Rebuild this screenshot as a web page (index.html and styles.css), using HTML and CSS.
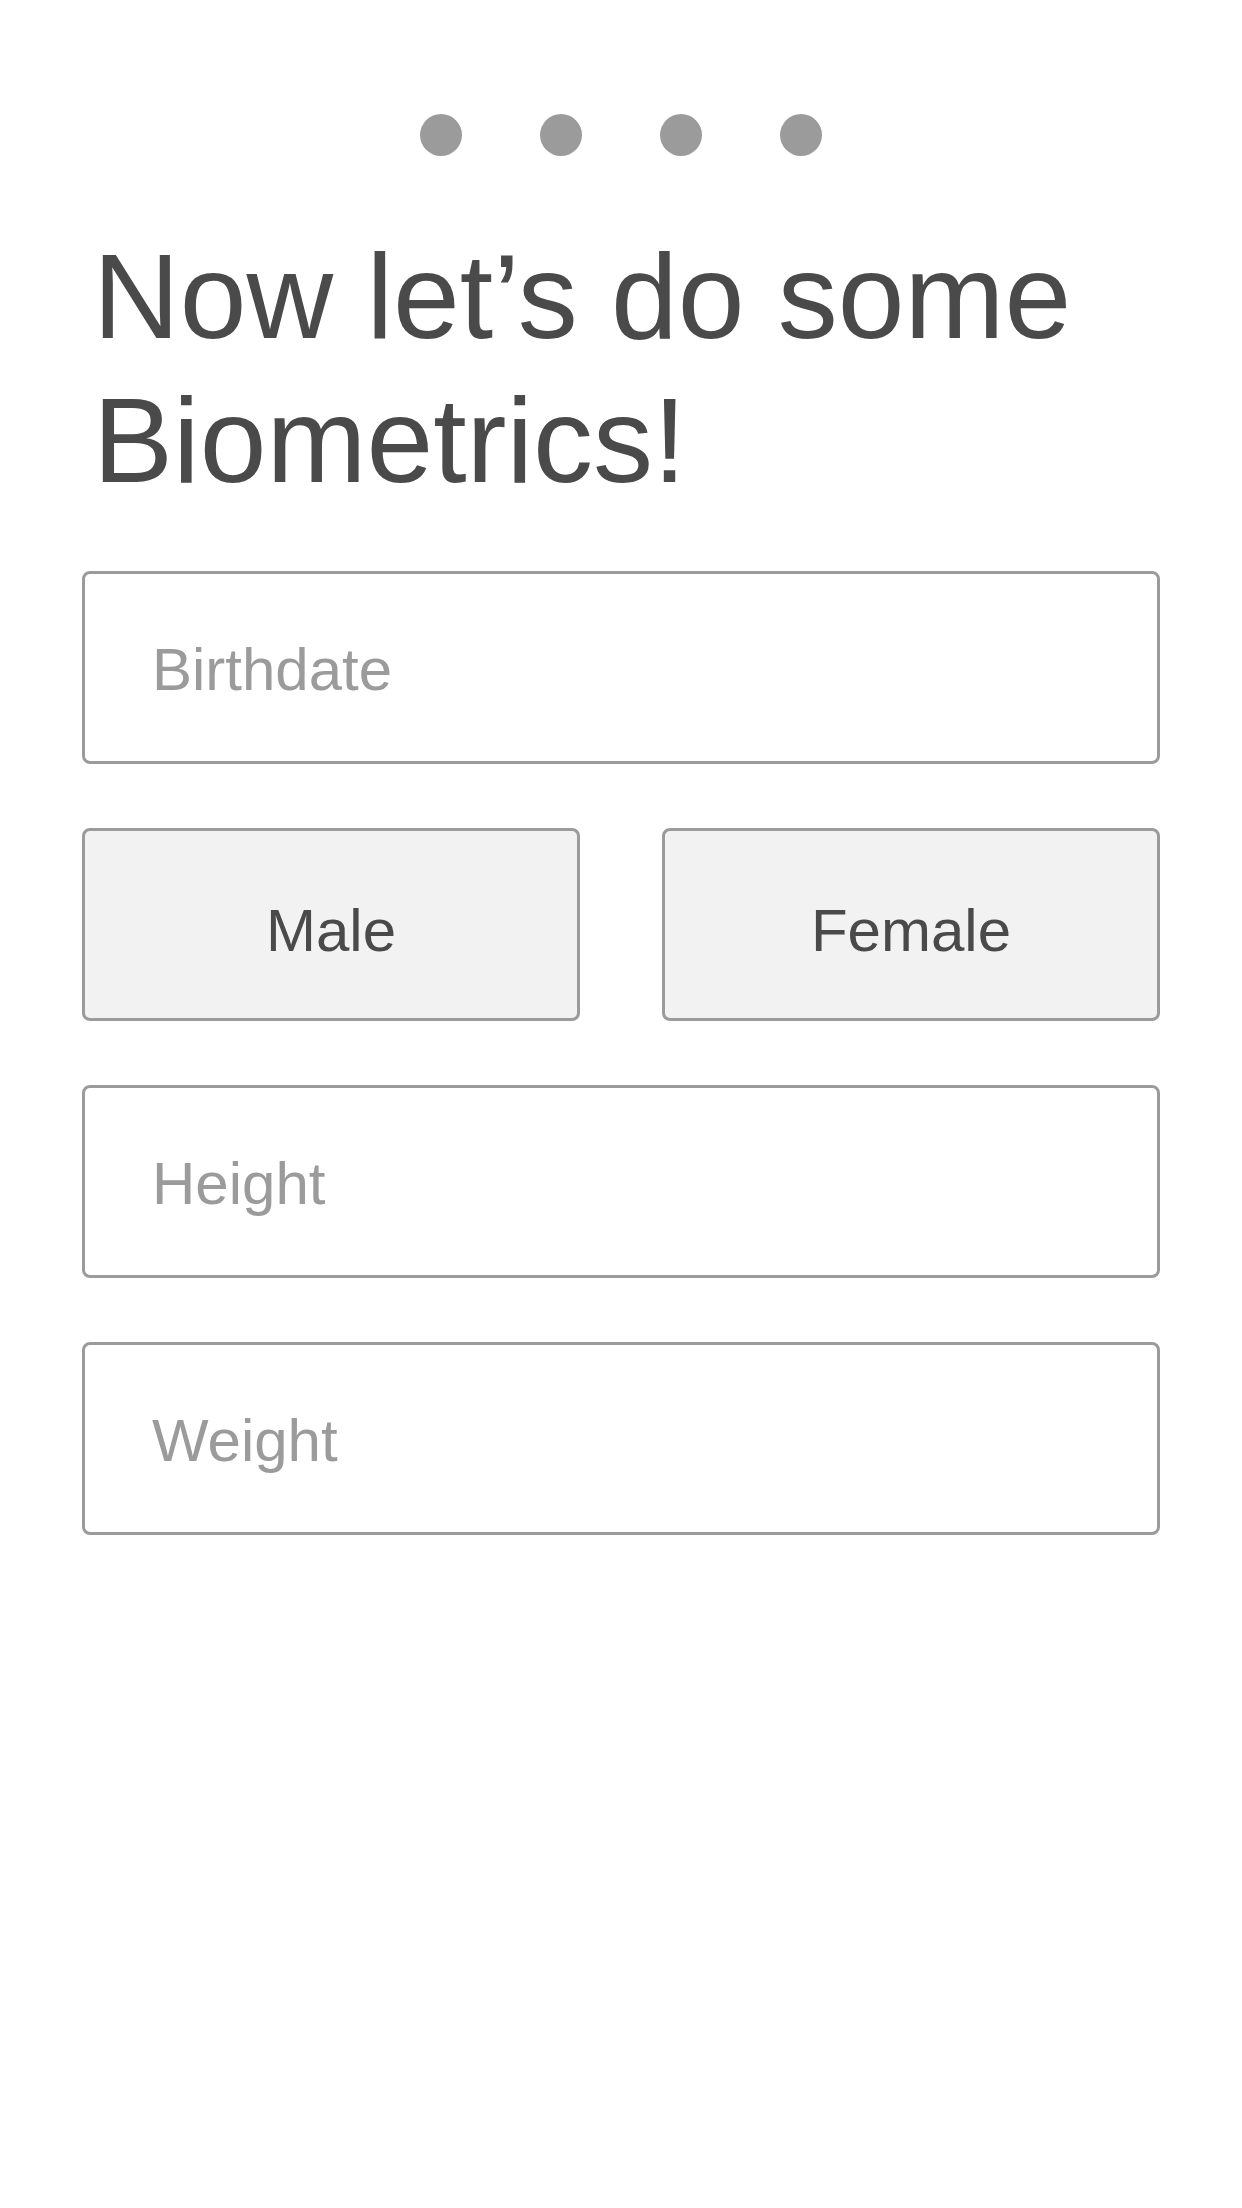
FILE: index.html
```html
<!DOCTYPE html>
<html>
<head>
<meta charset="utf-8">
<link rel="stylesheet" href="styles.css">
</head>
<body>
<div class="page">
  <div class="dots">
    <span class="dot"></span>
    <span class="dot"></span>
    <span class="dot"></span>
    <span class="dot"></span>
  </div>
  <h1 class="title">Now let’s do some<br>Biometrics!</h1>
  <div class="form">
    <div class="field"><span class="placeholder">Birthdate</span></div>
    <div class="choice-row">
      <div class="choice">Male</div>
      <div class="choice">Female</div>
    </div>
    <div class="field"><span class="placeholder">Height</span></div>
    <div class="field"><span class="placeholder">Weight</span></div>
  </div>
</div>
</body>
</html>
```
FILE: styles.css
```css
html, body {
  margin: 0;
  padding: 0;
  background: #ffffff;
}
body {
  width: 1242px;
  height: 2208px;
  font-family: "Liberation Sans", Arial, Helvetica, sans-serif;
  color: #4a4a4a;
}
.page {
  padding-top: 114px;
}
.dots {
  display: flex;
  justify-content: center;
  gap: 78px;
}
.dot {
  width: 42px;
  height: 42px;
  border-radius: 50%;
  background: #9b9b9b;
}
.title {
  margin: 68px 0 0 93px;
  font-size: 120px;
  font-weight: normal;
  line-height: 144px;
  color: #4a4a4a;
}
.form {
  margin: 59px 82px 0 82px;
  display: flex;
  flex-direction: column;
  gap: 64px;
}
.field {
  box-sizing: border-box;
  height: 193px;
  border: 3px solid #9b9b9b;
  border-radius: 8px;
  display: flex;
  align-items: center;
  padding-left: 67px;
  padding-top: 4px;
  background: #ffffff;
}
.placeholder {
  font-size: 60px;
  color: #9b9b9b;
}
.choice-row {
  display: flex;
  gap: 82px;
}
.choice {
  box-sizing: border-box;
  flex: 1;
  height: 193px;
  border: 3px solid #9b9b9b;
  border-radius: 8px;
  background: #f2f2f2;
  display: flex;
  align-items: center;
  justify-content: center;
  padding-top: 12px;
  font-size: 60px;
  color: #4a4a4a;
}
```
